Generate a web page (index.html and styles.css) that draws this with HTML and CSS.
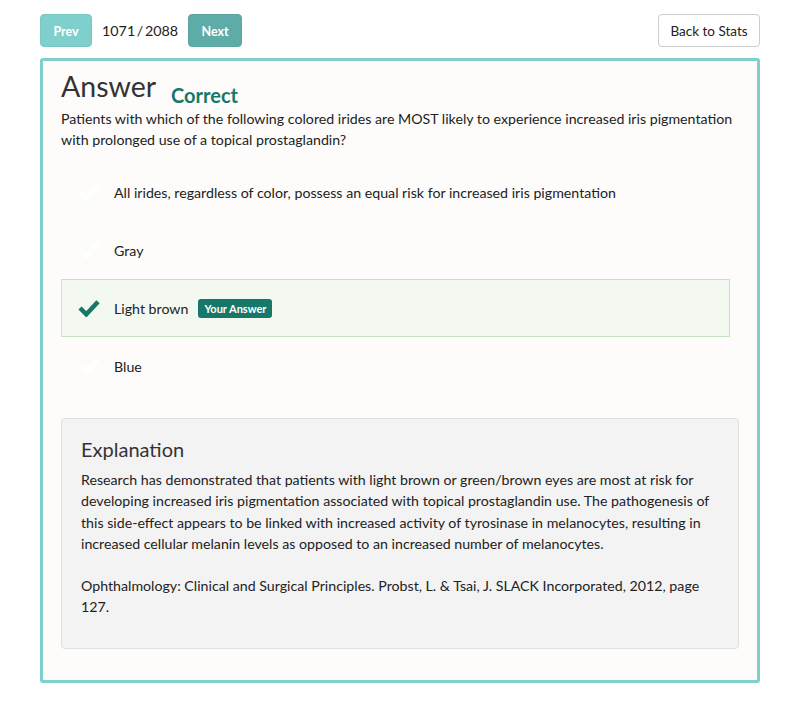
FILE: index.html
```html
<!DOCTYPE html>
<html>
<head>
<meta charset="utf-8">
<link rel="stylesheet" href="styles.css">
</head>
<body>
<div class="topbar">
  <div class="nav">
    <button class="btn btn-prev">Prev</button>
    <span class="count">1071 / 2088</span>
    <button class="btn btn-next">Next</button>
  </div>
  <button class="btn btn-back">Back to Stats</button>
</div>
<div class="card">
  <div class="title-row">
    <h1 class="title">Answer</h1>
    <span class="status">Correct</span>
  </div>
  <p class="question">Patients with which of the following colored irides are MOST likely to experience increased iris pigmentation with prolonged use of a topical prostaglandin?</p>
  <ul class="options">
    <li class="option"><span class="check ghost"><svg viewBox="0 0 24 20" width="22" height="18"><path d="M2 10 L9 17 L22 3" fill="none" stroke="currentColor" stroke-width="5"/></svg></span><span class="opt-text">All irides, regardless of color, possess an equal risk for increased iris pigmentation</span></li>
    <li class="option"><span class="check ghost"><svg viewBox="0 0 24 20" width="22" height="18"><path d="M2 10 L9 17 L22 3" fill="none" stroke="currentColor" stroke-width="5"/></svg></span><span class="opt-text">Gray</span></li>
    <li class="option selected"><span class="check"><svg viewBox="0 0 24 20" width="22" height="18"><path d="M2 10 L9 17 L22 3" fill="none" stroke="currentColor" stroke-width="5"/></svg></span><span class="opt-text">Light brown</span><span class="badge">Your Answer</span></li>
    <li class="option"><span class="check ghost"><svg viewBox="0 0 24 20" width="22" height="18"><path d="M2 10 L9 17 L22 3" fill="none" stroke="currentColor" stroke-width="5"/></svg></span><span class="opt-text">Blue</span></li>
  </ul>
  <div class="explanation">
    <h2 class="exp-title">Explanation</h2>
    <p>Research has demonstrated that patients with light brown or green/brown eyes are most at risk for developing increased iris pigmentation associated with topical prostaglandin use. The pathogenesis of this side-effect appears to be linked with increased activity of tyrosinase in melanocytes, resulting in increased cellular melanin levels as opposed to an increased number of melanocytes.</p>
    <p>Ophthalmology: Clinical and Surgical Principles. Probst, L. &amp; Tsai, J. SLACK Incorporated, 2012, page 127.</p>
  </div>
</div>
</body>
</html>
```

FILE: styles.css
```css
* { box-sizing: border-box; }
body {
  margin: 0;
  padding: 14px 40px 20px;
  font-family: Lato, "Open Sans", sans-serif;
  color: #333;
  background: #fff;
  font-size: 14.2px;
}
.topbar {
  display: flex;
  justify-content: space-between;
  align-items: center;
}
.nav {
  display: flex;
  align-items: center;
  gap: 10px;
}
.btn {
  font-family: inherit;
  height: 33px;
  border-radius: 4px;
  font-size: 13.5px;
  cursor: pointer;
}
.btn-prev, .btn-next {
  border: 1px solid transparent;
  color: #fff;
  font-weight: bold;
  font-size: 12.5px;
  padding: 1px 10px 0;
}
.btn-prev { background: #7fcfcc; border-color: #7ac8c5; width: 52px; }
.btn-next { background: #5eaca7; border-color: #59a5a0; width: 54px; }
.count { font-size: 14.3px; color: #222; word-spacing: -2px; }
.btn-back {
  background: #fff;
  border: 1px solid #ccc;
  color: #222;
  width: 102px;
  padding: 0;
}
.card {
  margin-top: 11px;
  border: 3px solid #7fcfcc;
  border-radius: 3px;
  background: #fdfcfa;
  padding: 7px 18px 31px;
}
.title-row {
  display: flex;
  align-items: baseline;
  gap: 15px;
}
.title {
  margin: 0;
  font-size: 28.5px;
  font-weight: normal;
  color: #333;
  line-height: 36px;
}
.status {
  font-size: 20px;
  font-weight: bold;
  color: #17786a;
  position: relative;
  top: 6px;
}
.question {
  margin: 4px 0 0;
  line-height: 21px;
  color: #222;
}
.options {
  list-style: none;
  margin: 13px 0 0;
  padding: 0;
  width: 669px;
}
.option {
  display: flex;
  align-items: center;
  height: 58px;
  padding-left: 16px;
  border: 1px solid transparent;
  color: #222;
}
.option.selected {
  background: #f3f9f1;
  border-color: #c5e3c0;
}
.check {
  width: 36px;
  color: #17786a;
  display: flex;
}
.check.ghost { color: #ffffff; }
.badge {
  margin-left: 10px;
  background: #17786a;
  color: #fff;
  font-size: 11px;
  font-weight: bold;
  padding: 3px 6px;
  border-radius: 3px;
}
.explanation {
  margin-top: 23px;
  background: #f3f3f3;
  border: 1px solid #e0e0e0;
  border-radius: 4px;
  padding: 18px 19px 30px;
}
.exp-title {
  margin: 0 0 8px;
  font-size: 20px;
  font-weight: normal;
  color: #333;
}
.explanation p {
  margin: 0 0 21px;
  line-height: 21.3px;
  color: #222;
}
.explanation p:last-child { margin-bottom: 0; }
```
